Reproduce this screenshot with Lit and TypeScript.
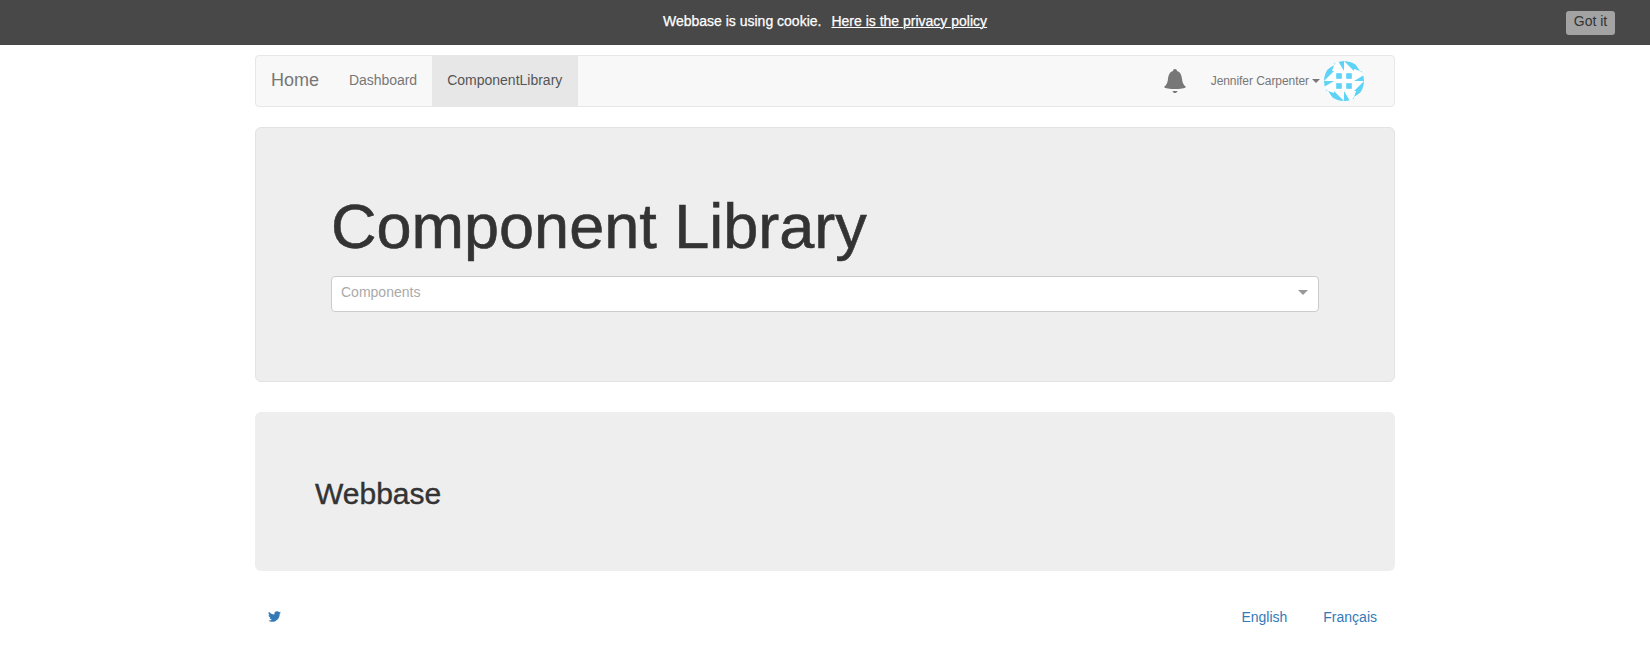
import { LitElement, html, css, svg } from "lit";
import { customElement } from "lit/decorators.js";

@customElement("user-avatar")
class UserAvatar extends LitElement {
  static styles = css`
    :host { display: block; width: 40px; height: 40px; }
    .picture { display: block; width: 40px; height: 40px; border-radius: 50%; background: #fff; }
  `;

  // A top edge and its right-hand corner, repeated in quarter turns about the centre.
  quarter(angle: number) {
    return svg`<g transform="rotate(${angle} 20 20)">
      <path d="M10 0H13L10 4ZM14 0H20V10ZM20 0H30V10ZM30 1L36 10L30 8ZM40 0V10H37Z"/>
      <rect x="12.2" y="12.2" width="5.600" height="5.600"/>
    </g>`;
  }

  render() {
    return html`<svg class="picture" viewBox="0 0 40 40" fill="#5fd3f5">
      ${[0, 90, 180, 270].map((a) => this.quarter(a))}
    </svg>`;
  }
}

@customElement("app-root")
class AppRoot extends LitElement {
  static styles = css`
    :host { display: block; font: 14px/20px "Liberation Sans", Arial, sans-serif; color: #333; }
    * { box-sizing: border-box; }
    a { color: #337ab7; text-decoration: none; }
    h1, h2 { margin: 0; font-weight: 500; line-height: 1.1; }
    .cookie { display: grid; grid-template-columns: 1fr auto 1fr; height: 45px; padding: 11px 35px 0; background: #484848; color: #fff; }
    .notice { grid-column: 2; -webkit-text-stroke: 0.25px #fff; display: flex; gap: 10px; }
    .notice a { color: #fff; text-decoration: underline; text-decoration-thickness: 1px; }
    .accept { justify-self: end; width: 49px; height: 24px; padding: 0 0 4px; border: 0; border-radius: 3px; background: #a3a3a3; color: #333; font: inherit; line-height: 20px; }
    .container { width: 1140px; margin: 10px auto 0; }
    .navbar { display: flex; height: 52px; border: 1px solid #e7e7e7; border-radius: 4px; background: #f8f8f8; }
    .navbar a { padding: 14px 15px 16px; color: #777; letter-spacing: -0.03px; }
    .navbar .brand { font-size: 18px; }
    .navbar .active { padding-right: 16px; background: #e7e7e7; color: #555; letter-spacing: 0; }
    .tools { display: flex; align-items: center; margin-left: auto; padding-right: 30px; color: #777; }
    .bell { width: 22px; height: 24px; margin-right: 25px; }
    .user { font-size: 12px; letter-spacing: -0.06px; padding-bottom: 1px; }
    .caret { width: 0; border: 4px solid transparent; border-top-color: currentColor; border-bottom: 0; }
    .tools .caret { margin: 0 4px 0 3px; }
    .hero { height: 255px; margin-top: 20px; padding: 64px 75px 0; border: 1px solid #e3e3e3; border-radius: 6px; background: #eee; }
    .hero h1 { font-size: 63px; margin-bottom: 15px; -webkit-text-stroke: 0.6px #333; }
    .select { display: flex; align-items: center; justify-content: space-between; height: 36px; padding: 0 10px 4px 9px; border: 1px solid #ccc; border-radius: 4px; background: #fff; color: #aaa; }
    .select .caret { border-width: 5px 5px 0; border-top-color: #999; }
    .panel { height: 159px; margin-top: 30px; padding: 65px 60px 0; border-radius: 6px; background: #eee; }
    .panel h2 { font-size: 30px; -webkit-text-stroke: 0.4px #333; }
    .footer { display: flex; align-items: center; margin-top: 36px; padding: 0 18px 0 13px; }
    .bird { width: 13px; height: 13px; margin-bottom: 1px; }
    .langs { display: flex; gap: 36px; margin-left: auto; }
  `;

  render() {
    return html`
      <div class="cookie">
        <div class="notice"><span>Webbase is using cookie.</span><a href="#">Here is the privacy policy</a></div>
        <button class="accept">Got it</button>
      </div>
      <div class="container">
        <nav class="navbar">
          <a class="brand" href="#">Home</a>
          <a href="#">Dashboard</a>
          <a class="active" href="#">ComponentLibrary</a>
          <div class="tools">
            <svg class="bell" viewBox="0 0 22 24" fill="#777">
              <path d="M11 0C12.300 0 12.900.8 13 2C16.500 3 17.500 6 18 10C18.500 14 19.500 16 22 18C21 19.500 16 20 11 20S1 19.500 0 18C2.500 16 3.500 14 4 10C4.500 6 5.500 3 9 2C9.100.8 9.700 0 11 0ZM8.500 22H13.500C13 23.400 12 24 11 24S9 23.400 8.500 22Z"/>
            </svg>
            <span class="user">Jennifer Carpenter</span><span class="caret"></span>
            <user-avatar></user-avatar>
          </div>
        </nav>
        <section class="hero">
          <h1>Component Library</h1>
          <div class="select"><span>Components</span><span class="caret"></span></div>
        </section>
        <section class="panel"><h2>Webbase</h2></section>
        <footer class="footer">
          <svg class="bird" viewBox="0 0 24 24" fill="#337ab7">
            <path d="M23.950 4.570a10 10 0 0 1-2.820.770 4.960 4.960 0 0 0 2.160-2.720c-.950.550-2 .950-3.130 1.180a4.920 4.920 0 0 0-8.380 4.480C7.690 8.090 4.070 6.130 1.640 3.160a4.820 4.820 0 0 0-.660 2.480c0 1.710.870 3.210 2.190 4.100a4.900 4.900 0 0 1-2.230-.620v.060a4.920 4.920 0 0 0 3.950 4.830 5 5 0 0 1-2.210.080 4.940 4.940 0 0 0 4.600 3.420A9.870 9.870 0 0 1 0 19.540a14 14 0 0 0 7.560 2.210c9.050 0 14-7.500 14-13.980 0-.210 0-.420-.020-.630a9.940 9.940 0 0 0 2.410-2.570z"/>
          </svg>
          <div class="langs"><a href="#">English</a><a href="#">Français</a></div>
        </footer>
      </div>
    `;
  }
}
